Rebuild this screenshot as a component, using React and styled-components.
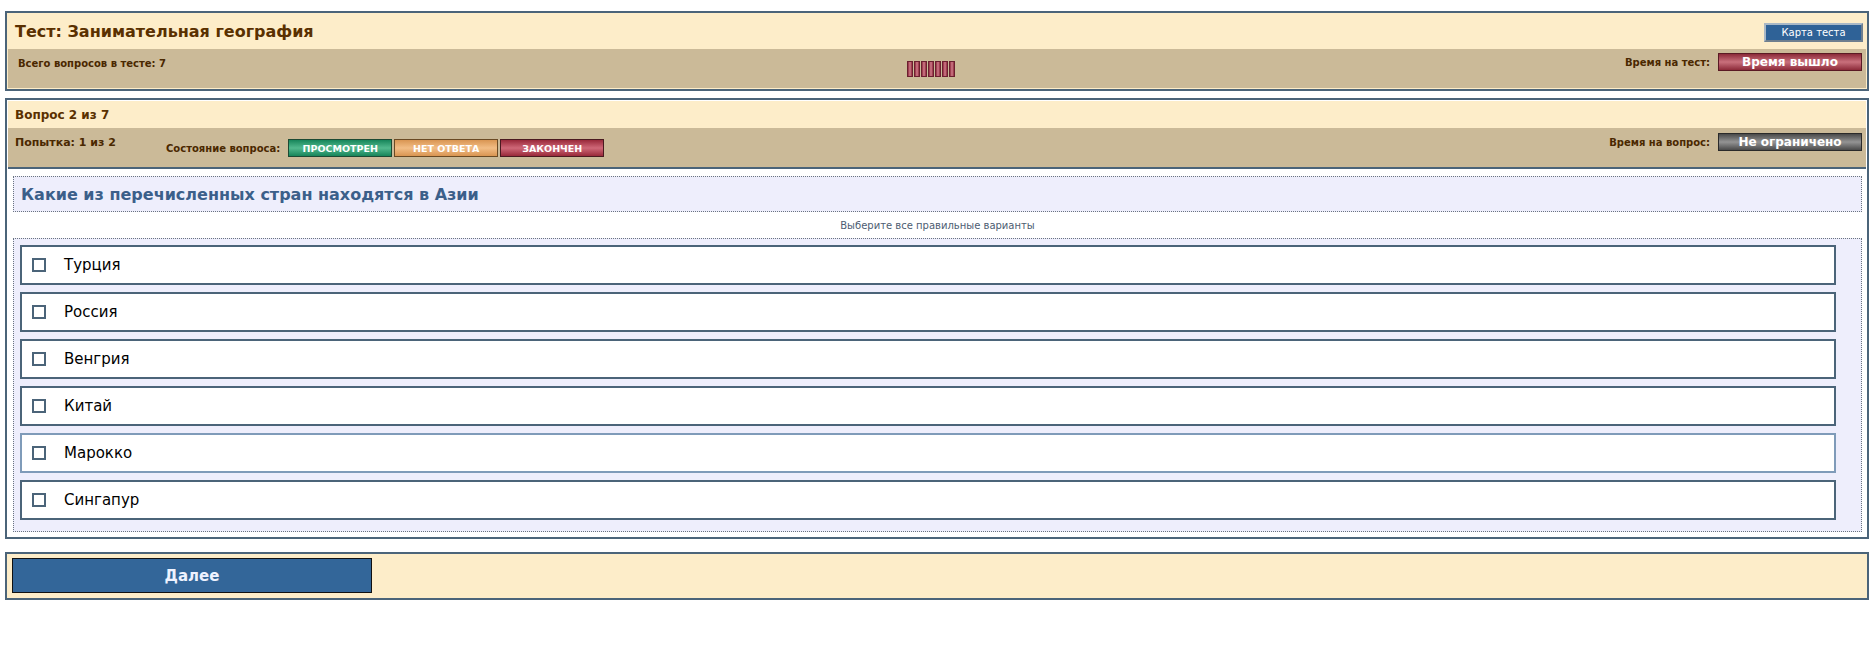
import React from "react";
import styled, { createGlobalStyle } from "styled-components";

const GlobalStyle = createGlobalStyle`
  body {
    margin: 0;
    background: #ffffff;
    font-family: "DejaVu Sans", Verdana, sans-serif;
  }
`

const Page = styled.div`
  padding: 11px 6px 0 5px;
  display: flex;
  flex-direction: column;
`

const Panel = styled.div`
  border: 2px solid #4b6479;
  padding: 1px;
  background: ${(p) => p.$bg || "#fdedc9"};
  margin-top: ${(p) => p.$gap || 0}px;
`

const TitleRow = styled.div`
  height: ${(p) => p.$h}px;
  background: #fdedc9;
  display: flex;
  align-items: center;
  justify-content: space-between;
  padding: 0 3px 0 7px;
`

const TestTitle = styled.h1`
  margin: 0;
  font-size: 16px;
  font-weight: bold;
  color: #5a3000;
`

const QuestionNum = styled.div`
  font-size: 12px;
  font-weight: bold;
  color: #5a3000;
  padding-top: 1px;
`

const MapButton = styled.div`
  width: 95px;
  height: 15px;
  background: #2f6297;
  border: 2px solid;
  border-color: #a9b8c6 #6f7f8e #6f7f8e #a9b8c6;
  color: #ffffff;
  font-size: 10px;
  display: flex;
  align-items: center;
  justify-content: center;
  margin-top: 1px;
`

const InfoBar = styled.div`
  height: 39px;
  background: #cbba98;
  display: grid;
  grid-template-columns: ${(p) => p.$cols};
  align-items: start;
  color: #4a2800;
  font-weight: bold;
`

const InfoText = styled.div`
  font-size: ${(p) => p.$size || 10}px;
  padding: ${(p) => p.$top}px 0 0 ${(p) => p.$left}px;
  white-space: nowrap;
`

const Progress = styled.div`
  display: flex;
  gap: 1px;
  margin: 12px 12px 0 0;
`

const ProgressCell = styled.div`
  width: 4px;
  height: 14px;
  border: 1px solid #6b2030;
  background: linear-gradient(90deg, #8e2a3c 0%, #d27d8c 50%, #8e2a3c 100%);
`

const TimeBox = styled.div`
  display: flex;
  justify-content: flex-end;
  align-items: center;
  gap: 8px;
  padding: ${(p) => p.$top}px 4px 0 0;
`

const Badge = styled.div`
  width: ${(p) => p.$w}px;
  height: ${(p) => p.$h}px;
  border: 1px solid ${(p) => p.$edge};
  background: linear-gradient(180deg, ${(p) => p.$dark} 0%, ${(p) => p.$light} 50%, ${(p) => p.$dark} 100%);
  color: #ffffff;
  font-size: ${(p) => p.$size}px;
  font-weight: bold;
  display: flex;
  align-items: center;
  justify-content: center;
  box-sizing: border-box;
  white-space: nowrap;
`

const StatusGroup = styled.div`
  display: flex;
  align-items: center;
  gap: 2px;
  padding-top: 11px;
`

const StatusLabel = styled.span`
  font-size: 10px;
  margin-right: 6px;
`

const Divider = styled.div`
  height: 2px;
  background: #4b6479;
`

const QuestionBody = styled.div`
  background: #ffffff;
  padding: 7px 4px 4px 5px;
`

const QuestionText = styled.div`
  height: 34px;
  border: 1px dotted #6a7480;
  background: #eeeefc;
  display: flex;
  align-items: center;
  padding-left: 7px;
  color: #3b5f8a;
  font-size: 16px;
  font-weight: bold;
`

const Hint = styled.div`
  height: 26px;
  display: flex;
  align-items: center;
  justify-content: center;
  font-size: 10px;
  color: #4d5d72;
`

const Options = styled.div`
  border: 1px dotted #6a7480;
  background: #eeeefc;
  padding: 6px 25px 11px 6px;
  display: flex;
  flex-direction: column;
  gap: 7px;
`

const Option = styled.label`
  height: 36px;
  border: 2px solid ${(p) => (p.$hover ? "#7f9bb9" : "#4b6479")};
  background: #ffffff;
  display: flex;
  align-items: center;
  padding-left: 10px;
  font-size: 15px;
  color: #000000;
`

const Check = styled.span`
  width: 10px;
  height: 10px;
  border: 2px solid #4b6479;
  background: #ffffff;
  margin-right: 18px;
  margin-top: -1px;
`

const Footer = styled.div`
  padding: 3px 4px 4px;
`

const NextButton = styled.button`
  width: 360px;
  height: 35px;
  border: 1px solid #111111;
  background: #336699;
  color: #eef2ff;
  font-family: "DejaVu Sans", Verdana, sans-serif;
  font-size: 15px;
  font-weight: bold;
  display: block;
`

const answers = ["Турция", "Россия", "Венгрия", "Китай", "Марокко", "Сингапур"]

export default function App() {
  return (
    <Page>
      <GlobalStyle />
      <Panel>
        <TitleRow $h={35}>
          <TestTitle>Тест: Занимательная география</TestTitle>
          <MapButton>Карта теста</MapButton>
        </TitleRow>
        <InfoBar $cols="1fr auto 1fr">
          <InfoText $top={9} $left={10}>Всего вопросов в тесте: 7</InfoText>
          <Progress>
            {Array.from({ length: 7 }).map((_, i) => (
              <ProgressCell key={i} />
            ))}
          </Progress>
          <TimeBox $top={4}>
            <InfoText $top={0} $left={0}>Время на тест:</InfoText>
            <Badge $w={144} $h={18} $size={12} $edge="#5a1a24" $dark="#8c2a39" $light="#c9707c">
              Время вышло
            </Badge>
          </TimeBox>
        </InfoBar>
      </Panel>

      <Panel $bg="#ffffff" $gap={7}>
        <TitleRow $h={27}>
          <QuestionNum>Вопрос 2 из 7</QuestionNum>
        </TitleRow>
        <InfoBar $cols="158px auto 1fr">
          <InfoText $size={11} $top={8} $left={7}>Попытка: 1 из 2</InfoText>
          <StatusGroup>
            <StatusLabel>Состояние вопроса:</StatusLabel>
            <Badge $w={104} $h={18} $size={9.5} $edge="#1c4a34" $dark="#17855a" $light="#52b98e">
              ПРОСМОТРЕН
            </Badge>
            <Badge $w={104} $h={18} $size={9.5} $edge="#6a4a24" $dark="#d99552" $light="#f2bd85">
              НЕТ ОТВЕТА
            </Badge>
            <Badge $w={104} $h={18} $size={9.5} $edge="#4a1a20" $dark="#99293a" $light="#cf6878">
              ЗАКОНЧЕН
            </Badge>
          </StatusGroup>
          <TimeBox $top={5}>
            <InfoText $top={0} $left={0}>Время на вопрос:</InfoText>
            <Badge $w={144} $h={18} $size={12} $edge="#2a2a2a" $dark="#4a4a4a" $light="#949494">
              Не ограничено
            </Badge>
          </TimeBox>
        </InfoBar>
        <Divider />
        <QuestionBody>
          <QuestionText>Какие из перечисленных стран находятся в Азии</QuestionText>
          <Hint>Выберите все правильные варианты</Hint>
          <Options>
            {answers.map((a) => (
              <Option key={a} $hover={a === "Марокко"}>
                <Check />
                {a}
              </Option>
            ))}
          </Options>
        </QuestionBody>
      </Panel>

      <Panel $gap={13}>
        <Footer>
          <NextButton>Далее</NextButton>
        </Footer>
      </Panel>
    </Page>
  )
}
